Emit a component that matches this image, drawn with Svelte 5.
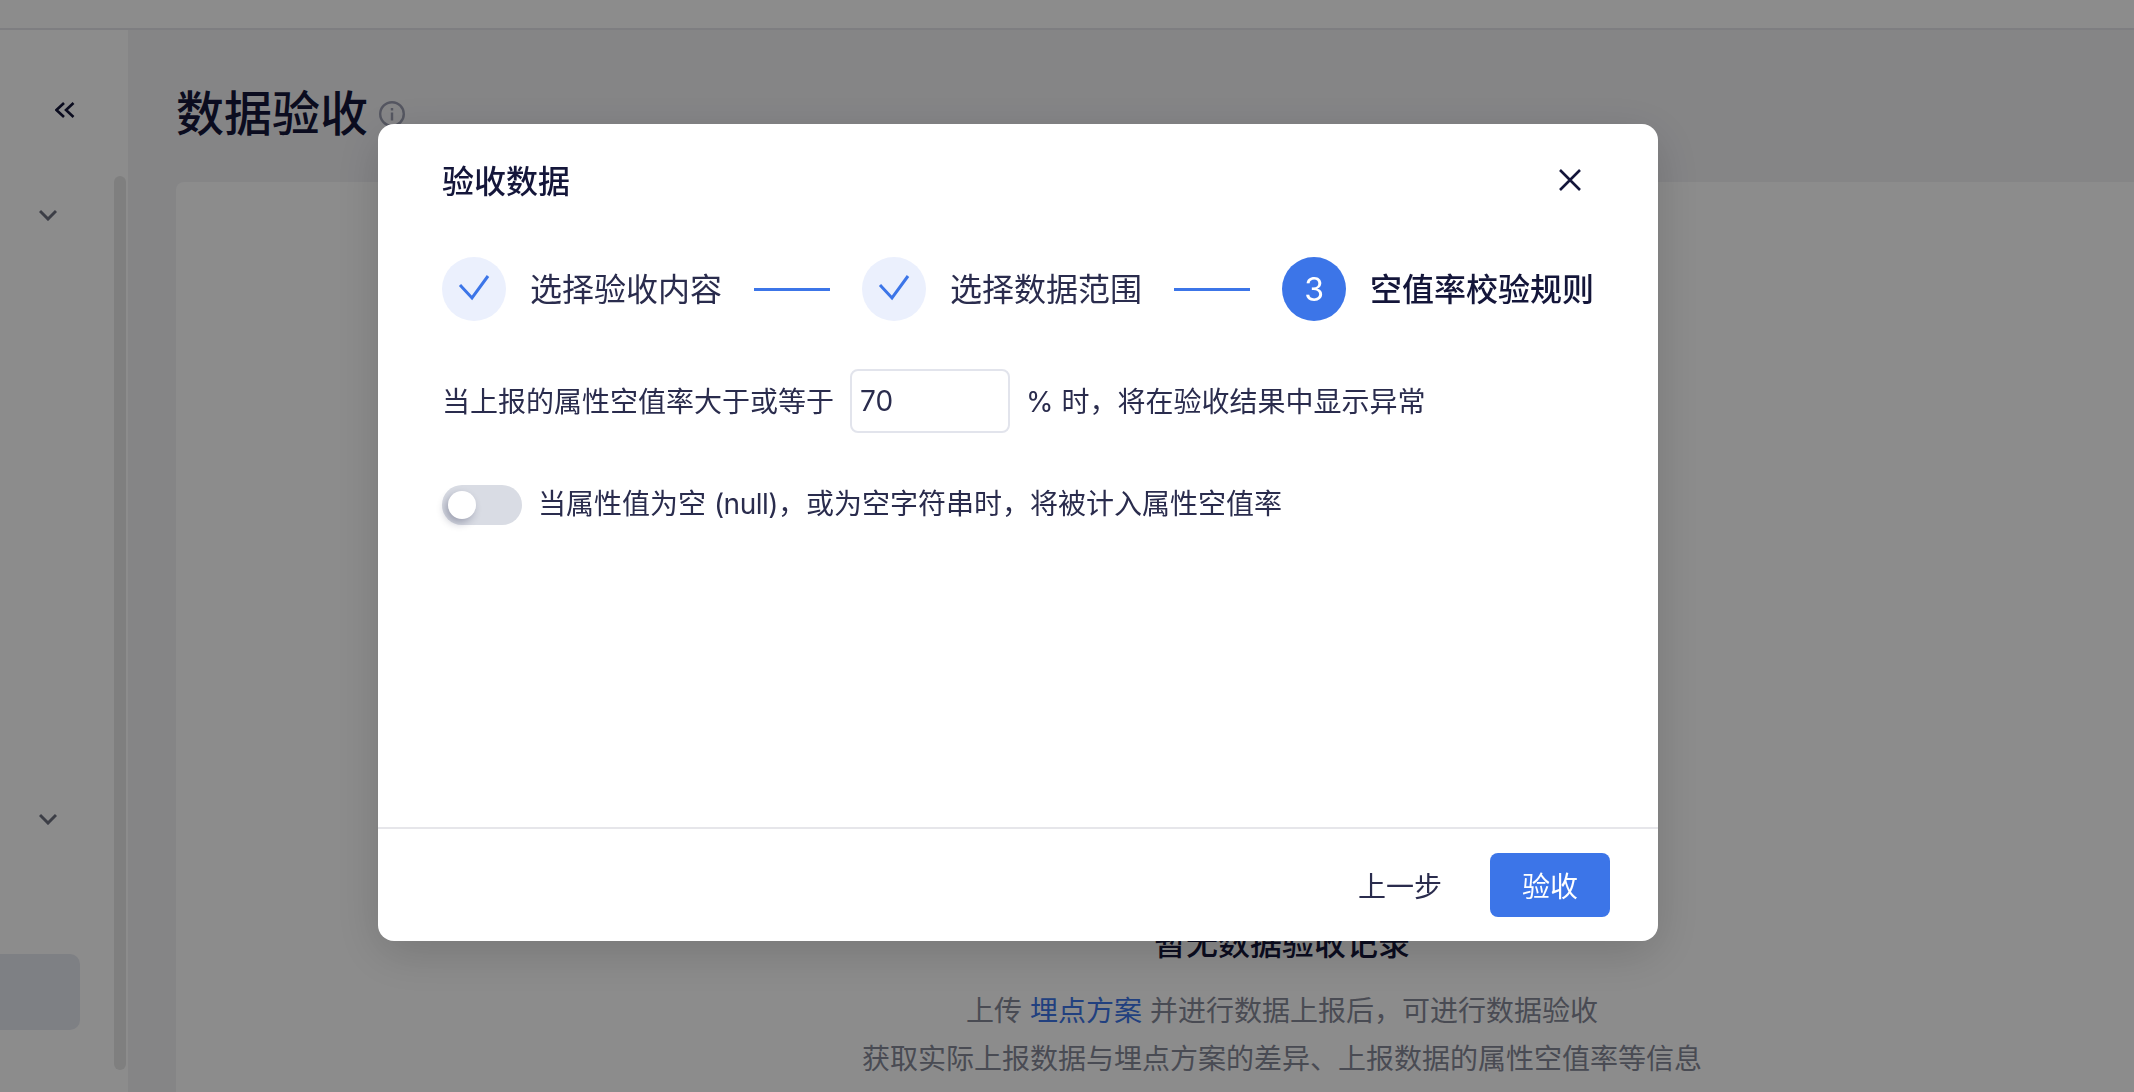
<script lang="ts">
  const steps = [
    { label: '选择验收内容', state: 'done' },
    { label: '选择数据范围', state: 'done' },
    { label: '空值率校验规则', state: 'active' },
  ];

  let threshold = $state('70');
  let countEmpty = $state(false);
</script>

<div class="page">
  <header class="topbar"></header>
  <div class="body">
    <aside class="sidebar">
      <div class="sidebar-inner">
        <div class="collapse">
          <svg width="20" height="16" viewBox="0 0 20 16" fill="none" stroke="#14163a" stroke-width="2.6">
            <path d="M9 1 1.500 8 9 15M18.500 1 11 8l7.500 7" />
          </svg>
        </div>
        <div class="nav-arrow first">
          <svg width="18" height="12" viewBox="0 0 18 12" fill="none" stroke="#6e7180" stroke-width="3">
            <path d="m1 2 8 8 8-8" />
          </svg>
        </div>
        <div class="nav-arrow second">
          <svg width="18" height="12" viewBox="0 0 18 12" fill="none" stroke="#6e7180" stroke-width="3">
            <path d="m1 2 8 8 8-8" />
          </svg>
        </div>
        <div class="nav-item"></div>
      </div>
      <div class="scrollbar"></div>
    </aside>
    <main class="main">
      <div class="title-row">
        <h1>数据验收</h1>
        <svg class="info" width="26" height="26" viewBox="0 0 26 26" fill="none" stroke="#9a9db0" stroke-width="2.4">
          <circle cx="13" cy="13" r="11.800" />
          <path d="M13 11.500v8M13 7v2.500" />
        </svg>
      </div>
      <section class="card">
        <h2>暂无数据验收记录</h2>
        <p>上传 <span class="link">埋点方案</span> 并进行数据上报后，可进行数据验收</p>
        <p>获取实际上报数据与埋点方案的差异、上报数据的属性空值率等信息</p>
      </section>
    </main>
  </div>
</div>

<div class="overlay">
  <div class="modal">
    <div class="modal-header">
      <span class="modal-title">验收数据</span>
      <button class="close" aria-label="关闭">
        <svg width="24" height="24" viewBox="0 0 24 24" fill="none" stroke="#14163a" stroke-width="2.6">
          <path d="m2 2 20 20M22 2 2 22" />
        </svg>
      </button>
    </div>

    <div class="steps">
      {#each steps as step, i}
        {#if i > 0}
          <span class="connector"></span>
        {/if}
        <div class="step" class:active={step.state === 'active'}>
          <span class="step-icon">
            {#if step.state === 'done'}
              <svg width="34" height="28" viewBox="0 0 34 28" fill="none" stroke="#3c75e8" stroke-width="3">
                <path d="M3 10 15 23 31 1" />
              </svg>
            {:else}
              {i + 1}
            {/if}
          </span>
          <span class="step-label">{step.label}</span>
        </div>
      {/each}
    </div>

    <div class="modal-body">
      <div class="rule-row">
        <span class="rule-text">当上报的属性空值率大于或等于</span>
        <input class="rule-input" bind:value={threshold} />
        <span class="rule-text">% 时，将在验收结果中显示异常</span>
      </div>
      <div class="switch-row">
        <button class="switch" class:on={countEmpty} aria-label="计入空值率" onclick={() => (countEmpty = !countEmpty)}>
          <span class="knob"></span>
        </button>
        <span class="switch-text">当属性值为空 <span class="null">(null)</span>，或为空字符串时，将被计入属性空值率</span>
      </div>
    </div>

    <div class="modal-footer">
      <button class="btn-text">上一步</button>
      <button class="btn-primary">验收</button>
    </div>
  </div>
</div>

<style>
  :global(body) {
    margin: 0;
    overflow: hidden;
    font-family: Inter, 'Noto Sans CJK SC', sans-serif;
    color: #14163a;
  }

  .page {
    display: flex;
    flex-direction: column;
    height: 1092px;
    overflow: hidden;
    background: #fff;
  }

  .topbar {
    height: 28px;
    flex: none;
    background: #fff;
    border-bottom: 2px solid #e6e6ec;
  }

  .body {
    display: flex;
    flex: 1;
    min-height: 0;
  }

  .sidebar {
    display: flex;
    flex: none;
    width: 128px;
    background: #fff;
  }

  .sidebar-inner {
    display: flex;
    flex-direction: column;
    width: 114px;
  }

  .collapse {
    display: flex;
    justify-content: flex-end;
    padding: 72px 39px 0 0;
    line-height: 0;
  }

  .nav-arrow {
    padding-left: 39px;
    line-height: 0;
  }

  .nav-arrow.first {
    margin-top: 91px;
  }

  .nav-arrow.second {
    margin-top: 592px;
  }

  .nav-item {
    width: 80px;
    height: 76px;
    margin-top: 129px;
    border-radius: 0 10px 10px 0;
    background: #e6e9f1;
  }

  .scrollbar {
    width: 12px;
    height: 894px;
    margin-top: 146px;
    border-radius: 6px;
    background: #e8e8e8;
  }

  .main {
    flex: 1;
    min-width: 0;
    padding: 0 0 0 48px;
    background: #f2f2f5;
  }

  .title-row {
    display: flex;
    align-items: center;
    gap: 11px;
    box-sizing: border-box;
    height: 152px;
    padding-top: 16px;
  }

  h1 {
    margin: 0;
    font-size: 48px;
    font-weight: 500;
    line-height: 1;
  }

  .card {
    display: flex;
    flex-direction: column;
    align-items: center;
    height: 1000px;
    padding-top: 742px;
    box-sizing: border-box;
    width: 2212px;
    border-radius: 8px;
    background: #fff;
  }

  h2 {
    margin: 0 0 27px;
    font-size: 32px;
    font-weight: 500;
    line-height: 40px;
  }

  .card p {
    margin: 0 0 8px;
    font-size: 28px;
    line-height: 40px;
    color: #868998;
  }

  .link {
    color: #3c75e8;
  }

  .overlay {
    position: fixed;
    inset: 0;
    background: rgba(0, 0, 0, 0.45);
  }

  .modal {
    display: flex;
    flex-direction: column;
    box-sizing: border-box;
    width: 1280px;
    height: 817px;
    margin: 124px 0 0 378px;
    border-radius: 16px;
    background: #fff;
    box-shadow: 0 12px 48px rgba(0, 0, 0, 0.16);
    font-size: 28px;
    color: #2a2c4d;
  }

  .modal-header {
    display: flex;
    align-items: center;
    justify-content: space-between;
    padding: 35px 64px 0;
    height: 44px;
  }

  .modal-title {
    padding-bottom: 4px;
    font-size: 32px;
    font-weight: 500;
    color: #14163a;
  }

  .close {
    display: flex;
    margin: 0 12px 2px 0;
    padding: 0;
    border: 0;
    background: none;
  }

  .steps {
    display: flex;
    align-items: center;
    margin: 54px 0 0 64px;
  }

  .step {
    display: flex;
    align-items: center;
    gap: 24px;
    font-size: 32px;
  }

  .step-label {
    padding-bottom: 5px;
  }

  .step.active .step-label {
    font-weight: 500;
    color: #14163a;
  }

  .step-icon {
    display: flex;
    align-items: center;
    justify-content: center;
    width: 64px;
    height: 64px;
    border-radius: 50%;
    background: #ebf0fd;
  }

  .step.active .step-icon {
    background: #3c75e8;
    color: #fff;
  }

  .connector {
    width: 76px;
    height: 3px;
    margin: 1px 32px 0;
    background: #3c75e8;
  }

  .modal-body {
    flex: 1;
    padding: 48px 64px 0;
  }

  .rule-row {
    display: flex;
    align-items: center;
    gap: 16px;
    height: 64px;
  }

  .rule-text {
    padding-bottom: 2px;
  }

  .rule-input {
    box-sizing: border-box;
    width: 160px;
    height: 64px;
    padding: 0 8px;
    border: 2px solid #e2e4ec;
    border-radius: 8px;
    outline: none;
    font: inherit;
    font-size: 28px;
    color: #2a2c4d;
  }

  .switch-row {
    display: flex;
    align-items: center;
    gap: 16px;
    height: 40px;
    margin-top: 52px;
  }

  .switch-text {
    padding-bottom: 7px;
  }

  .null {
    letter-spacing: -0.5px;
  }

  .switch {
    display: flex;
    align-items: center;
    box-sizing: border-box;
    width: 80px;
    height: 40px;
    padding: 0 6px;
    border: 0;
    border-radius: 20px;
    background: #d9dce4;
  }

  .switch.on {
    justify-content: flex-end;
    background: #3c75e8;
  }

  .knob {
    width: 28px;
    height: 28px;
    border-radius: 50%;
    background: #fff;
    box-shadow: -3px 4px 8px rgba(20, 22, 58, 0.3);
  }

  .modal-footer {
    display: flex;
    align-items: center;
    justify-content: flex-end;
    gap: 48px;
    box-sizing: border-box;
    height: 114px;
    padding: 0 48px;
    border-top: 2px solid #e6e6ea;
  }

  button {
    font: inherit;
    cursor: pointer;
  }

  .btn-text {
    padding: 0;
    border: 0;
    background: none;
    color: #2a2c4d;
  }

  .btn-primary {
    width: 120px;
    height: 64px;
    border: 0;
    border-radius: 8px;
    background: #3c75e8;
    color: #fff;
  }
</style>
